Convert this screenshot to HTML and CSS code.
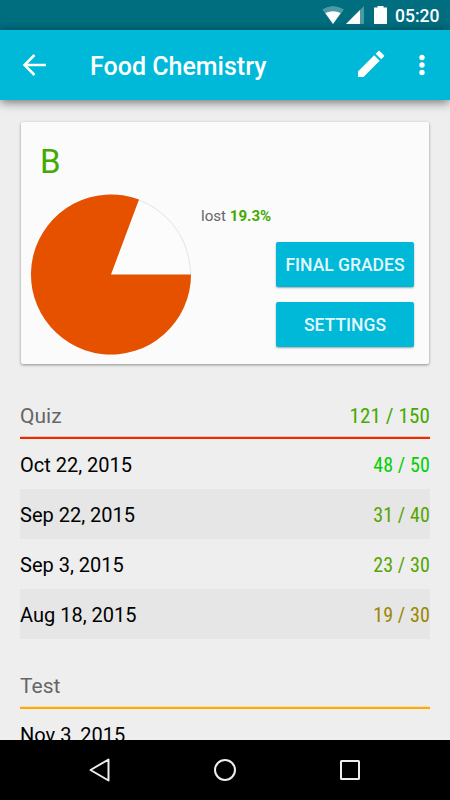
FILE: index.html
```html
<!DOCTYPE html>
<html lang="en">
<head>
<meta charset="utf-8">
<title>Food Chemistry</title>
<link rel="stylesheet" href="styles.css">
</head>
<body>
<div class="screen">
  <div class="status">
    <svg class="status-icons" width="70" height="30" viewBox="320 0 70 30" fill="#fff">
      <path opacity=".3" d="M322.300 9.500Q333 2.500 344 9.500L333 24Z"/>
      <path d="M325.300 13Q333 9.400 340.700 13L333 24Z"/>
      <path opacity=".3" d="M364 6V24H346Z"/>
      <path d="M360 10V24H346Z"/>
      <path d="M377.500 6H383.500V7.500H387V24H374V7.500H377.500Z"/>
    </svg>
    <span class="clock">05:20</span>
  </div>
  <header class="appbar">
    <svg class="back" width="24" height="24" viewBox="0 0 24 24" fill="none" stroke="#fff" stroke-width="2.500"><path d="M12.500 2L2.500 12L12.500 22M2.500 12H24"/></svg>
    <h1>Food Chemistry</h1>
    <svg class="edit" width="28" height="28" viewBox="0 0 28 28" fill="#fff"><path d="M1 21.500L17.200 5.300L22.700 10.800L6.500 27H1ZM18.700 3.800L21.500 .9Q22 .4 22.600 .9L27 5.300Q27.600 6 27 6.600L24.200 9.300Z"/></svg>
    <svg class="more" width="6" height="22" viewBox="0 0 6 22" fill="#fff"><circle cx="3" cy="3.500" r="2.700"/><circle cx="3" cy="11" r="2.700"/><circle cx="3" cy="18.500" r="2.700"/></svg>
  </header>
  <main class="content">
    <section class="card">
      <div class="summary">
        <div class="grade">B</div>
        <svg class="pie" width="162" height="162" viewBox="-81 -81.500 162 162"><circle r="79.500" fill="#fcfcfc" stroke="#e4e4e4"/><path fill="#e65100" d="M0 0H80A80 80 0 1 1 28 -74.940Z"/></svg>
      </div>
      <div class="details">
        <p class="lost">lost <b>19.3%</b></p>
        <button class="button">FINAL GRADES</button>
        <button class="button">SETTINGS</button>
      </div>
    </section>
    <section class="group quiz">
      <h2><span>Quiz</span><span class="score">121 / 150</span></h2>
      <div class="row"><span>Oct 22, 2015</span><span class="score top">48 / 50</span></div>
      <div class="row"><span>Sep 22, 2015</span><span class="score good">31 / 40</span></div>
      <div class="row"><span>Sep 3, 2015</span><span class="score good">23 / 30</span></div>
      <div class="row"><span>Aug 18, 2015</span><span class="score fair">19 / 30</span></div>
    </section>
    <section class="group test">
      <h2><span>Test</span></h2>
      <div class="row"><span>Nov 3, 2015</span></div>
    </section>
  </main>
  <nav class="navbar">
    <svg width="24" height="26" viewBox="0 0 24 26"><path d="M20.500 2.500V23.500L2.500 13Z"/></svg>
    <svg width="24" height="26" viewBox="0 0 24 26"><circle cx="12" cy="13" r="10"/></svg>
    <svg width="24" height="26" viewBox="0 0 24 26"><rect x="3" y="4" width="18" height="18" rx=".5"/></svg>
  </nav>
</div>
</body>
</html>
```
FILE: styles.css
```css
* { box-sizing: border-box; }
body { margin: 0; font-family: Roboto, sans-serif; }
.screen { width: 450px; height: 800px; display: flex; flex-direction: column; overflow: hidden; background: #eee; }
.status { height: 30px; flex: none; display: flex; justify-content: flex-end; align-items: center; padding-right: 10px; background: #006e7f; color: #fff; }
.clock { width: 45px; margin-left: 5px; padding-top: 1px; font-size: 17.5px; font-weight: 500; line-height: 30px; white-space: nowrap; }
.appbar { position: relative; height: 70px; flex: none; display: flex; align-items: center; padding: 0 25px 0 22px; background: #00b8d8; box-shadow: 0 2px 10px rgba(0,0,0,.55); }
.appbar h1 { flex: 1; margin: 3px 0 0 44px; color: #fff; font-size: 25px; font-weight: 500; line-height: 30px; white-space: nowrap; }
.edit { margin: 0 34px 2px 0; }
.content { flex: 1; min-height: 0; overflow: hidden; padding: 22px 20px 0; }
.card { display: flex; height: 242px; margin: 0 1px; border-radius: 2px; background: #fbfbfb; box-shadow: 0 1px 3px rgba(0,0,0,.4); }
.summary { width: 180px; padding-left: 9px; }
.grade { height: 71px; padding: 20px 0 0 10px; color: #43aa00; font-size: 33px; line-height: 40px; }
.pie { display: block; }
.details { flex: 1; padding: 84px 15px 0 0; display: flex; flex-direction: column; align-items: flex-end; }
.lost { align-self: flex-start; margin: 0 0 16px; color: #666; font-size: 15.1px; line-height: 20px; }
.lost b { color: #43aa00; }
.button { width: 138px; height: 45px; margin: 0 0 15px; padding: 1px 0 0; border: 0; border-radius: 2px; background: #00b8d8; color: #e3f7fb; font: 500 17.5px Roboto, sans-serif; white-space: nowrap; box-shadow: 0 1px 2px rgba(0,0,0,.35); }
.group h2 { display: flex; justify-content: space-between; height: 44px; margin: 0; border-bottom: 2px solid; font-size: 21px; font-weight: 400; line-height: 42px; }
.quiz { padding-top: 31px; }
.test { padding-top: 26px; }
.quiz h2 { border-color: #e92c00; box-shadow: inset 0 -1px #efc4ba; }
.test h2 { border-color: #ffab00; box-shadow: inset 0 -1px #f0dfba; }
.group h2 span { color: #666; }
.group h2 .score { color: #43aa00; }
.row { display: flex; justify-content: space-between; height: 50px; font-size: 20px; line-height: 52px; color: #000; }
.row:nth-child(odd) { background: #e6e6e6; }
.score { font-family: "Roboto Condensed", Roboto, sans-serif; font-stretch: 75%; letter-spacing: .1px; }
.top { color: #00d000; }
.good { color: #55a500; }
.fair { color: #9b8500; }
.navbar { height: 60px; flex: none; display: flex; justify-content: center; align-items: center; gap: 101px; background: #000; }
.navbar svg { fill: none; stroke: #eee; stroke-width: 2; stroke-linejoin: round; }
```
